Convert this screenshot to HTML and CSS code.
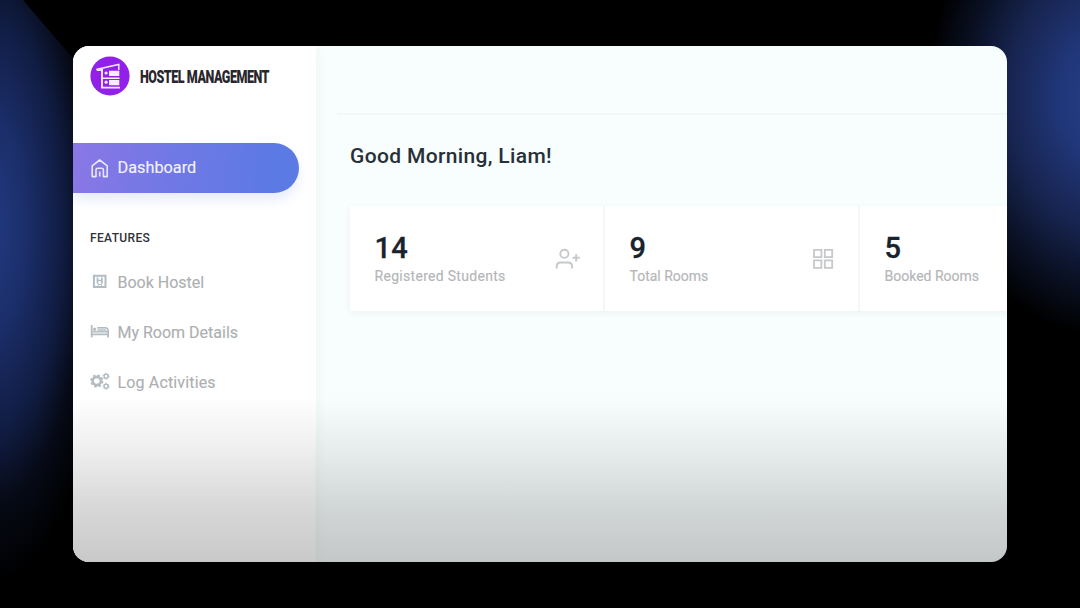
FILE: index.html
```html
<!DOCTYPE html>
<html lang="en">
<head>
<meta charset="utf-8">
<title>Hostel Management</title>
<link rel="stylesheet" href="styles.css">
</head>
<body>
<div class="stage">
  <div class="window">
    <aside class="sidebar">
      <div class="brand">
        <svg class="brand-logo" viewBox="0 0 40 40">
          <circle cx="20" cy="20" r="19.6" fill="#9121e8"/>
          <g stroke="#fbeaff" fill="none">
            <path d="M6.3 13.5L29.5 8.2" stroke-width="1.6"/>
            <path d="M6.8 14.1H13M12 13v18.6h18" stroke-width="1.9"/>
            <path d="M12 22.2h17.5M28.8 8.8V14" stroke-width="1.4"/>
          </g>
          <path fill="#fbeaff" d="M19 14.7h10.3v5.3H19zM19 24h10.3v5.2H19z"/>
          <circle cx="16.1" cy="17" r="1.6" fill="#fbeaff"/>
          <circle cx="16.1" cy="26.2" r="1.6" fill="#fbeaff"/>
        </svg>
        <span class="brand-name">HOSTEL MANAGEMENT</span>
      </div>
      <a class="nav-active">
        <svg class="nav-icon" viewBox="0 0 20 20" fill="none" stroke="#e9e6ff" stroke-width="1.6" stroke-linejoin="round">
          <path d="M2.2 18.6V7.8L9.7 2l7.5 5.800v10.800h-3.800V12q0-1.800-1.800-1.800H7.800Q6 10.200 6 12v6.600zM9.700 13.500v5"/>
        </svg>
        <span>Dashboard</span>
      </a>
      <h2 class="section">FEATURES</h2>
      <nav class="menu">
        <a class="item">
          <svg class="nav-icon" viewBox="0 0 20 20" fill="none" stroke="#b3bcc2">
            <path d="M3.900 3.700h11.600v11.400H3.900z" stroke-width="2"/>
            <path d="M7.500 5.500v6.200M11.900 5.500v6.200M7.500 8.500h4.400" stroke-width="1.700"/>
            <path d="M8 14.700v-2.100h3.400v2.100" stroke-width="1"/>
          </svg>
          <span>Book Hostel</span>
        </a>
        <a class="item">
          <svg class="nav-icon" viewBox="0 0 20 20" fill="none" stroke="#b3bcc2">
            <path d="M1.700 3v12.400M1.700 12.400h16.400M18.100 9v6.400" stroke-width="1.800"/>
            <path d="M2.300 9.800h16M7.200 5.800h8.600q2.500.4 2.500 3.800" stroke-width="1.500"/>
            <path d="M7.400 6.500h8l1.500 2.700H7.400z" fill="#c8cfd3" stroke="none"/>
            <circle cx="4.600" cy="7.300" r="1.200" fill="#b3bcc2"/>
          </svg>
          <span>My Room Details</span>
        </a>
        <a class="item">
          <svg class="nav-icon" viewBox="0 0 20 20" fill="none" stroke="#b3bcc2">
            <circle cx="6.800" cy="9" r="4.100" stroke-width="2.600"/>
            <circle cx="6.800" cy="9" r="5.700" stroke-width="1.800" stroke-dasharray="2.400 2.070"/>
            <circle cx="16.100" cy="4.200" r="2" stroke-width="1.500"/>
            <circle cx="16.100" cy="4.200" r="3" stroke-width="1" stroke-dasharray="1.500 1.640"/>
            <circle cx="16.100" cy="14.300" r="2" stroke-width="1.500"/>
            <circle cx="16.100" cy="14.300" r="3" stroke-width="1" stroke-dasharray="1.500 1.640"/>
          </svg>
          <span class="t-log">Log Activities</span>
        </a>
      </nav>
    </aside>
    <main class="main">
      <header class="topbar"></header>
      <h1 class="greeting">Good Morning, Liam!</h1>
      <section class="cards">
        <article class="card">
          <div><div class="num">14</div><div class="label t-reg">Registered Students</div></div>
          <svg class="card-icon" viewBox="0 0 26 26" fill="none" stroke="#c6c8ca" stroke-width="1.900">
            <circle cx="9.400" cy="7.800" r="4.100"/>
            <path d="M1.700 22.500v-2q0-4 4-4h7.400q4 0 4 4v2M21.200 8.200v7.200M17.600 11.800h7.200"/>
          </svg>
        </article>
        <article class="card">
          <div><div class="num">9</div><div class="label">Total Rooms</div></div>
          <svg class="card-icon" viewBox="0 0 26 26" fill="none" stroke="#c6c8ca" stroke-width="1.800">
            <path d="M4 3.800h7.400v7.400H4zM14.800 3.800h7.400v7.400h-7.400zM4 14.400h7.400v7.400H4zM14.800 14.400h7.400v7.400h-7.400z"/>
          </svg>
        </article>
        <article class="card">
          <div><div class="num">5</div><div class="label">Booked Rooms</div></div>
        </article>
      </section>
    </main>
    <div class="shade"></div>
  </div>
</div>
</body>
</html>
```
FILE: styles.css
```css
* { box-sizing: border-box; }
body { margin: 0; background: #000; font-family: Roboto, "Liberation Sans", sans-serif; }
.stage {
  width: 1080px; height: 608px; padding: 46px 73px; overflow: hidden; position: relative;
  background: radial-gradient(ellipse 178px 238px at 1105px 98px, #263f86 0%, #21377a 25%, #17244f 55%, #0a1124 78%, #000 100%);
}
.stage::before {
  content: ""; position: absolute; left: 0; top: 0; width: 130px; height: 608px;
  background: radial-gradient(ellipse 125px 360px at -10px 225px, #213a80 0%, #1c2f6c 28%, #101c42 58%, rgba(7,11,24,.9) 78%, transparent 100%);
  clip-path: polygon(0 0, 23px 0, 76px 62px, 110px 90px, 110px 608px, 0 608px);
}
.window {
  position: relative; width: 934px; height: 516px; border-radius: 16px;
  overflow: hidden; display: flex; background: #f8fdfd;
}
.sidebar { width: 243px; flex: none; background: #fff; box-shadow: 0 0 12px rgba(60,80,110,.055); position: relative; }
.brand { display: flex; align-items: center; height: 60px; padding-left: 17px; }
.brand-logo { width: 40px; height: 40px; flex: none; }
.brand-name {
  margin: 2px 0 0 10px; font-size: 18.5px; font-weight: 900; color: #29262c; white-space: nowrap;
  transform: scaleX(.677); transform-origin: 0 50%; letter-spacing: -.7px; line-height: 20px;
}
.nav-active {
  display: flex; align-items: center; margin-top: 37px; width: 226px; height: 50px; padding-left: 17px;
  border-radius: 0 25px 25px 0; background: linear-gradient(100deg, #8b77e6 0%, #7278e5 40%, #5b7ae4 90%);
  box-shadow: 0 7px 12px rgba(95,118,232,.14); color: #f2f2ff; font-size: 16.3px;
}
.nav-active span, .item span { -webkit-text-stroke: .15px; }
.nav-active span { margin-top: -2px; }
.nav-icon { width: 20px; height: 20px; margin-right: 7.500px; flex: none; }
.section { margin: 36px 0 0 17px; font-size: 12px; line-height: 18px; font-weight: 500; color: #303238; letter-spacing: .35px; }
.menu { margin-top: 10px; }
.item { display: flex; align-items: center; height: 50px; padding-left: 17px; font-size: 16px; color: #adafb1; }
.t-log { letter-spacing: .15px; }
.main { flex: 1; min-width: 0; padding-left: 21px; }
.topbar { height: 69px; border-bottom: 2px solid #f4f7f8; }
.greeting { margin: 27px 0 0 13px; font-size: 21px; line-height: 28px; font-weight: 500; color: #272f37; letter-spacing: .35px; white-space: nowrap; }
.cards { display: flex; gap: 2px; margin: 36px 0 0 13px; width: 763px; height: 105px; background: #f5f6f7; box-shadow: 0 2px 7px rgba(50,60,80,.06); }
.card { flex: 1; display: flex; justify-content: space-between; background: #fff; padding: 25px 22px 0 24.500px; }
.num { font-size: 29px; line-height: 34px; font-weight: 500; color: #17242e; letter-spacing: .3px; -webkit-text-stroke: .3px; }
.label { font-size: 14px; line-height: 22px; color: #b4b6b8; white-space: nowrap; -webkit-text-stroke: .15px; }
.t-reg { letter-spacing: .3px; }
.card-icon { width: 26px; height: 26px; margin-top: 15px; }
.shade {
  position: absolute; inset: auto 0 0; height: 166px;
  background: linear-gradient(rgba(0,0,0,0), rgba(0,0,0,.065) 32%, rgba(0,0,0,.155) 68%, rgba(0,0,0,.21));
}
```
